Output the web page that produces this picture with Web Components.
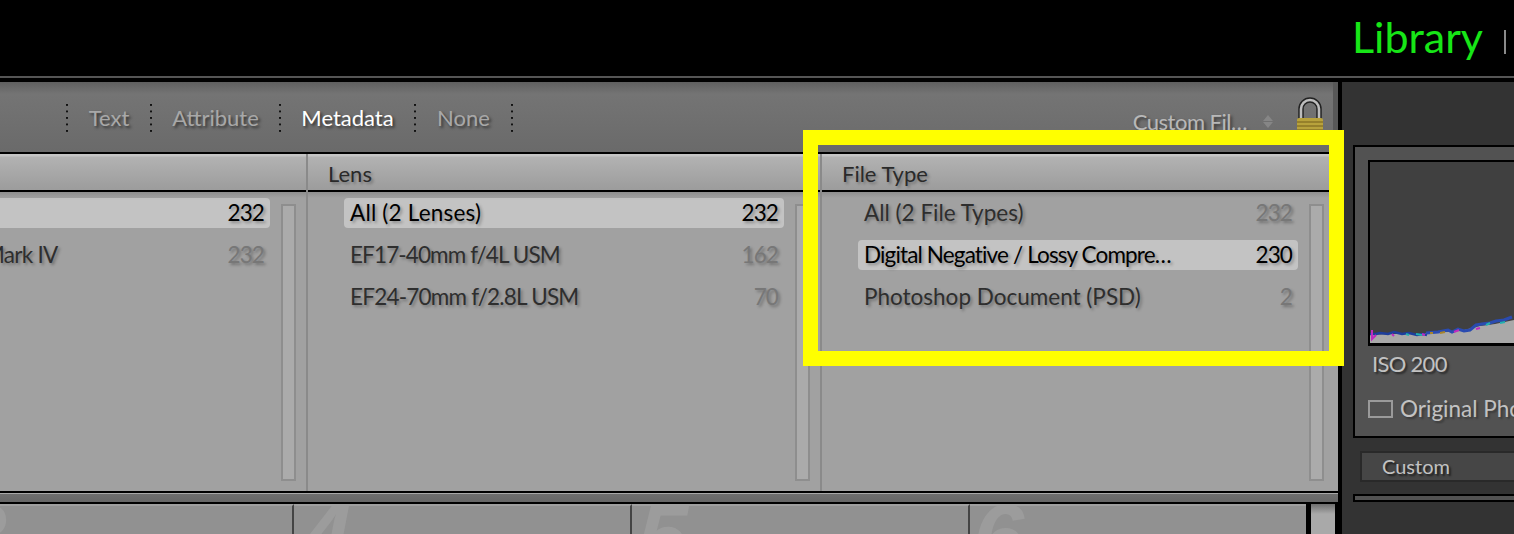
<!DOCTYPE html>
<html lang="en"><head><meta charset="utf-8"><title>Library filter</title>
<style>
html,body{margin:0;height:534px;overflow:hidden;background:#000}
body{font-family:Lato,"Liberation Sans",sans-serif}
</style></head><body>
<lr-app>
  <lr-topbar slot="top"></lr-topbar>
  <lr-filter slot="main">
    <lr-tabs></lr-tabs>
    <lr-columns>
      <lr-col clip title="">
        <lr-row sel label="All (1 Camera)" n="232"></lr-row>
        <lr-row ls="-.7" label="Canon EOS-1D Mark IV" n="232"></lr-row>
      </lr-col>
      <lr-col title="Lens">
        <lr-row sel ls=".2" label="All (2 Lenses)" n="232"></lr-row>
        <lr-row ls="-.88" label="EF17-40mm f/4L USM" n="162"></lr-row>
        <lr-row ls="-.78" label="EF24-70mm f/2.8L USM" n="70"></lr-row>
      </lr-col>
      <lr-col last title="File Type">
        <lr-row label="All (2 File Types)" n="232"></lr-row>
        <lr-row sel ls="-.86" label="Digital Negative / Lossy Compre…" n="230"></lr-row>
        <lr-row label="Photoshop Document (PSD)" n="2"></lr-row>
      </lr-col>
    </lr-columns>
    <lr-thumbs></lr-thumbs>
  </lr-filter>
  <lr-side slot="side"></lr-side>
  <lr-highlight slot="over"></lr-highlight>
</lr-app>
<script>
const TEXT='font-family:Lato,"Liberation Sans",sans-serif;';
function def(name,html){
  customElements.define(name,class extends HTMLElement{
    constructor(){super();this.attachShadow({mode:'open'});}
    connectedCallback(){this.shadowRoot.innerHTML=typeof html==='function'?html(this):html;}
  });
}
def('lr-app',`<style>
:host{display:flex;flex-direction:column;position:relative;width:1514px;height:534px;overflow:hidden}
.row{display:flex;flex:1;min-height:0;background:#000}
</style><slot name="top"></slot><div class="row"><slot name="main"></slot><slot name="side"></slot></div><slot name="over"></slot>`);
def('lr-topbar',`<style>
:host{display:flex;flex:none;box-sizing:border-box;height:78px;background:#000;border-bottom:2px solid #555;justify-content:flex-end;align-items:flex-start;${TEXT}}
.lib{color:#17e617;font-size:43px;line-height:52px;margin-top:11px}
.sep{width:2px;height:24px;background:#8a8a8a;margin:30px 8px 0 21px}
</style><span class="lib">Library</span><span class="sep"></span>`);
def('lr-filter',`<style>
:host{display:flex;flex-direction:column;flex:none;width:1338px;background:#000;padding-top:4px;box-sizing:border-box}
</style><slot></slot>`);
def('lr-tabs',`<style>
:host{display:flex;flex:none;height:70px;align-items:flex-start;box-sizing:border-box;padding-left:66px;background:linear-gradient(#5f5f5f,#747474 12px,#6a6a6a);font-size:22px;${TEXT}}
.d{flex:none;width:2px;height:30px;margin-top:22px;background:linear-gradient(#111 2px,transparent 2px) 0 0/2px 6.5px repeat-y}
.t{flex:none;color:#a8a8a8;line-height:30px;margin-top:21px;text-shadow:2px 2px 3px rgba(0,0,0,.55);text-align:center}
.on{color:#fff}
.right{margin-left:auto;display:flex;align-items:flex-start}
.cf{color:#b8b8b8;margin-top:25px;line-height:30px;margin-right:15px;letter-spacing:-.5px;text-shadow:2px 2px 3px rgba(0,0,0,.5)}
.edge{flex:none;width:5px;height:70px;background:#585858;margin-left:7px}
svg{display:block;flex:none}
</style>
<span class="d"></span><span class="t" style="width:82px">Text</span>
<span class="d"></span><span class="t" style="width:127px">Attribute</span>
<span class="d"></span><span class="t on" style="width:133px">Metadata</span>
<span class="d"></span><span class="t" style="width:95px">None</span>
<span class="d"></span>
<div class="right"><span class="cf">Custom Fil…</span>
<svg width="12" height="15" viewBox="0 0 12 15" style="margin:32px 22px 0 0"><path d="M6 1l5 6H1z M6 14l5-6H1z" fill="#868686"/></svg>
<svg width="30" height="50" viewBox="0 0 30 50" style="margin-top:14px"><path d="M5 24V13a9 9 0 0 1 18 0v11" fill="none" stroke="#222" stroke-width="5.5"/><path d="M5 24V13a9 9 0 0 1 18 0v11" fill="none" stroke="#bdbdbd" stroke-width="2.6"/><rect x="1" y="22" width="26" height="24" rx="2" fill="#b8a23c"/><path d="M1 26h26M1 30h26M1 34h26" stroke="#8a7626" stroke-width="1.4"/></svg>
<span class="edge"></span></div>`);
def('lr-columns',`<style>
:host{display:flex;flex:1;min-height:0;overflow:hidden;background:#000;margin-top:2px}
</style><slot></slot>`);
def('lr-col',h=>`<style>
:host{display:flex;flex-direction:column;flex:none;box-sizing:border-box;width:${h.hasAttribute('last')?516:h.hasAttribute('clip')?308:514}px;${h.hasAttribute('last')?'':'border-right:2px solid #8a8a8a;'}overflow:hidden;${TEXT}background:#a1a1a1}
.head{flex:none;box-sizing:border-box;height:38px;background:linear-gradient(#c4c4c4 0,#c4c4c4 2px,#b2b2b2 3px,#9c9c9c);border-bottom:2px solid #000;font-size:22px;line-height:40px;padding-left:20px;color:#2a2a2a;text-shadow:2px 2px 3px rgba(0,0,0,.3)}
.body{flex:1;display:flex;min-height:0;background:linear-gradient(#8f8f8f,#a1a1a1 6px);${h.hasAttribute('clip')?'margin-left:-206px;':''}}
.list{flex:none;width:476px;padding:6px 0 0 36px;box-sizing:border-box;display:flex;flex-direction:column;gap:12px}
.track{flex:none;box-sizing:border-box;width:15px;height:277px;margin:12px 0 0 11px;border:2px solid #8e8e8e;background:#ababab}
</style><div class="head">${h.getAttribute('title')}</div><div class="body"><div class="list"><slot></slot></div><div class="track"></div></div>`);
def('lr-row',h=>`<style>
:host{display:flex;flex:none;box-sizing:border-box;height:30px;align-items:center;justify-content:space-between;padding:0 6px 2px 6px;border-radius:4px;font-size:22.5px;white-space:nowrap;${h.hasAttribute('sel')?'background:#c3c3c3;color:#000;':'color:#2e2e2e;'}text-shadow:2px 2px 3px rgba(0,0,0,.3)}
.l{letter-spacing:${h.getAttribute('ls')||0}px}
.n{letter-spacing:-.9px;color:${h.hasAttribute('sel')?'#000':'#777'}}
</style><span class="l">${h.getAttribute('label')}</span><span class="n">${h.getAttribute('n')}</span>`);
def('lr-thumbs',`<style>
:host{display:flex;flex-direction:column;flex:none;height:43px;background:#000;box-sizing:border-box;padding-top:2px;${TEXT}}
.strip{flex:none;height:9px;background:linear-gradient(#6e6e6e,#666);border-top:1px solid #a8a8a8;box-sizing:border-box}
.cells{flex:1;display:flex;margin-top:2px;overflow:hidden}
.c{box-sizing:border-box;background:#919191;border-top:2px solid #9f9f9f;border-right:2px solid #444;overflow:hidden;font:italic 700 92px/92px "Liberation Sans",sans-serif;color:#9c9c9c;flex:none}
.c span{display:block;margin-top:-15px}
.sb{flex:none;width:24px;margin-left:5px;background:linear-gradient(#6e6e6e,#a9a9a9 10px)}
</style><div class="strip"></div><div class="cells">
<div class="c" style="width:294px"><span style="margin-left:-44px">3</span></div>
<div class="c" style="width:338px"><span style="margin-left:6px">4</span></div>
<div class="c" style="width:338px"><span style="margin-left:5px">5</span></div>
<div class="c" style="width:336px;border-right:0"><span style="margin-left:3px">6</span></div>
<div class="sb"></div></div>`);
def('lr-side',`<style>
:host{display:flex;flex-direction:column;flex:1;min-width:0;margin:4px 0 0 4px;background:#333;padding:63px 0 0 11px;box-sizing:border-box;overflow:hidden;${TEXT}color:#c2c2c2;white-space:nowrap}
.panel{flex:none;box-sizing:border-box;height:293px;width:170px;background:#525252;border:solid #000;border-width:2px 0 2px 2px;padding:13px 0 0 13px}
.hist{height:186px;box-sizing:border-box;background:#404040;border:solid #000;border-width:2px 0 3px 2px;overflow:hidden}
.iso{font-size:22px;line-height:30px;margin-top:3px;padding-left:4px;letter-spacing:-.7px;text-shadow:2px 2px 2px rgba(0,0,0,.5)}
.orig{display:flex;align-items:center;font-size:22.5px;line-height:30px;margin-top:15px;text-shadow:2px 2px 2px rgba(0,0,0,.3);overflow:hidden}
.orig i{flex:none;width:25px;height:18px;box-sizing:border-box;border:2px solid #9a9a9a;margin-right:7px}
.sel{flex:none;height:31px;box-sizing:border-box;margin:13px 0 0 7px;background:#464646;border:solid #292929;border-width:2px 0 2px 2px;font-size:20px;line-height:27px;padding-left:20px;text-shadow:2px 2px 2px rgba(0,0,0,.6)}
.bar{flex:none;height:8px;box-sizing:border-box;margin-top:12px;background:#525252;border:solid #000;border-width:2px 0 2px 2px}
svg{display:block}
</style><div class="panel"><div class="hist"><svg width="150" height="181" viewBox="0 0 150 181">
<path d="M0 181V173L20 172L52 172L56 171L90 169L110 164L125 162L144 158V181Z" fill="#a9a9a9"/>
<path d="M0 172l6 0 4-1 8 1 6-2 8 2 7-1 8 2 6-1 4 1" fill="none" stroke="#1d3e9c" stroke-width="2.4"/>
<path d="M56 171l12-1 10-2 4 2 6-3 6 2 6-1 6-5 6-1 8-1 6-2 8-1 8-3" fill="none" stroke="#2a4bb0" stroke-width="3"/>
<path d="M2 168l0 9 4-4M22 172l2 2M52 172l3 1M84 170l5-2M106 167l4-1" fill="none" stroke="#c02ac0" stroke-width="2"/>
<path d="M36 172l3 1M46 172l6 1M116 163l4-2M130 161l5-1" fill="none" stroke="#22b0b0" stroke-width="2"/>
<path d="M70 171l5-1M60 171l3 0" fill="none" stroke="#a8842a" stroke-width="2"/></svg></div>
<div class="iso">ISO 200</div><div class="orig"><i></i>Original Photo</div></div>
<div class="sel">Custom</div><div class="bar"></div>`);
def('lr-highlight',`<style>
:host{display:block;position:absolute;left:803px;top:130px;width:541px;height:236px;box-sizing:border-box;border:15px solid #ff0;pointer-events:none}
</style>`);
</script>
</body></html>
